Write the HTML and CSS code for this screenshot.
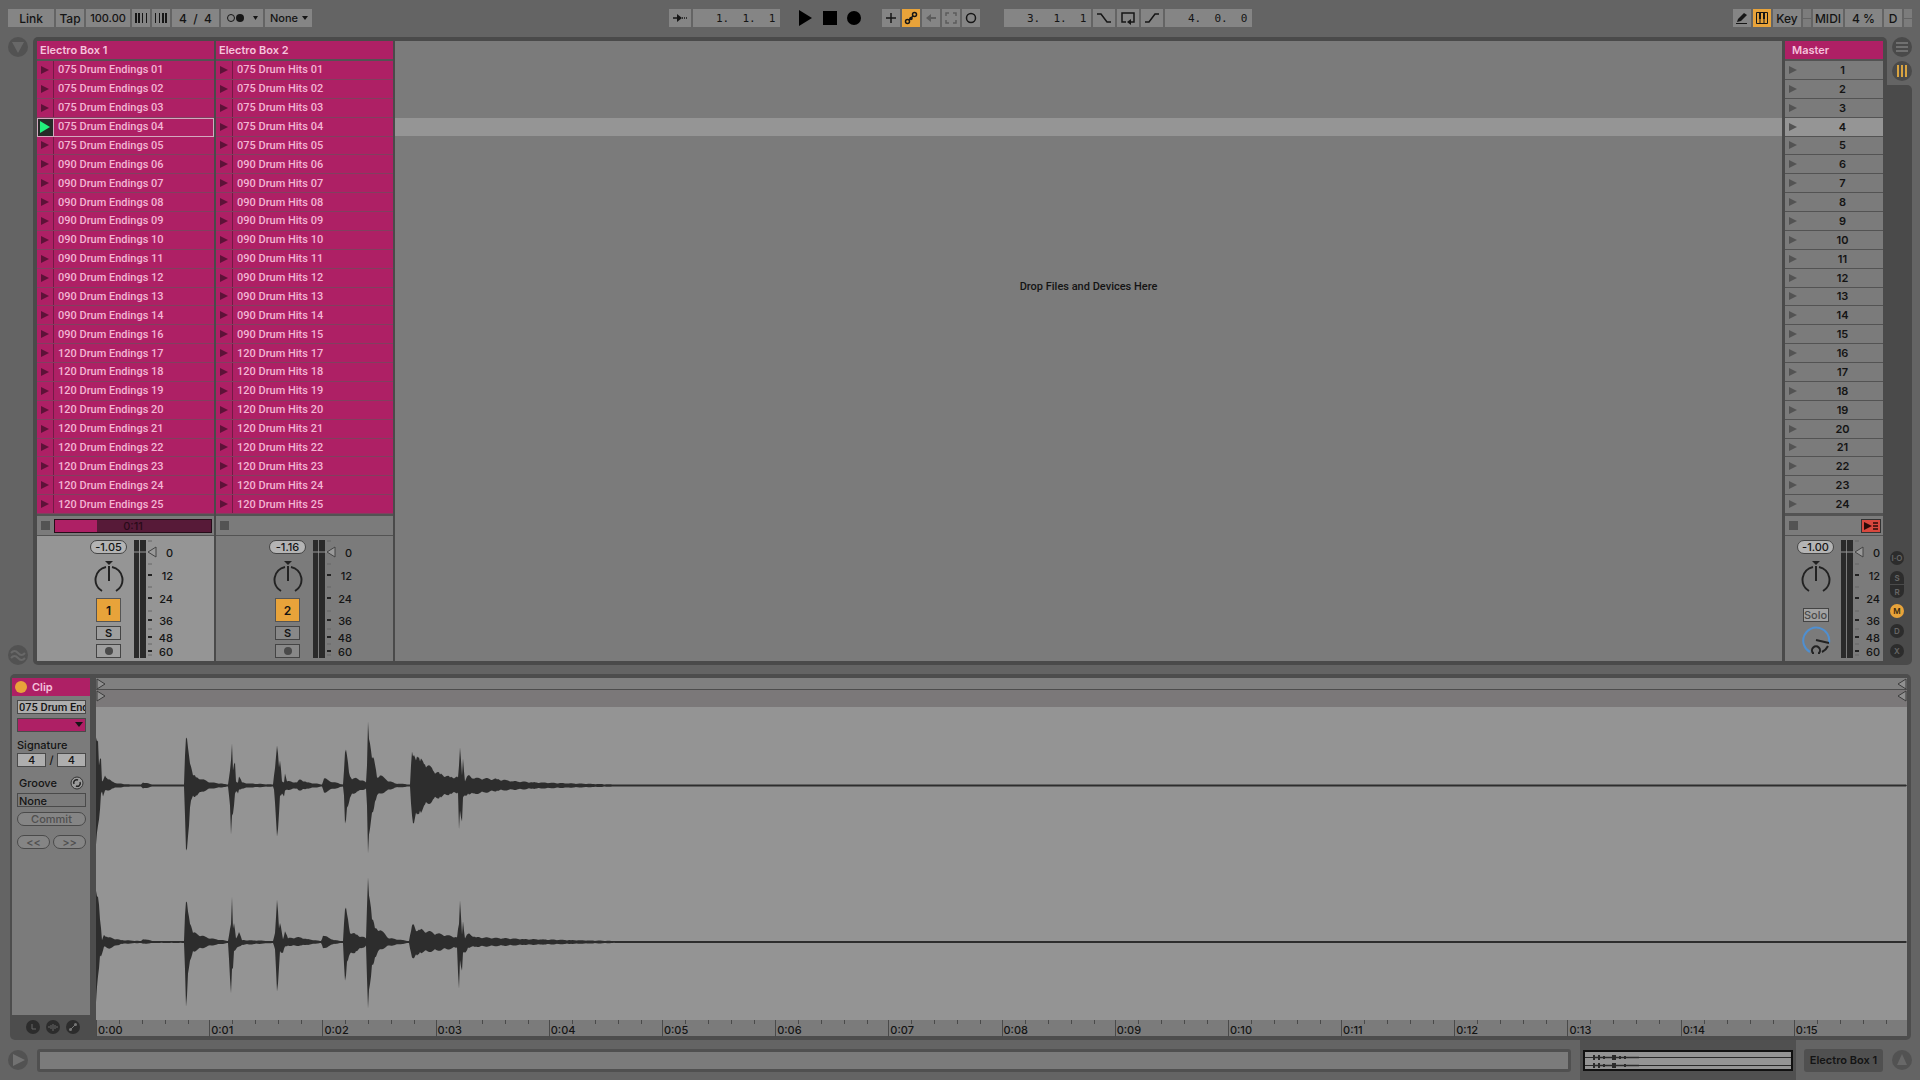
FILE: index.html
```html
<!DOCTYPE html>
<html lang="en">
<head>
  <meta charset="utf-8">
  <title>Drum Session</title>
  <link rel="stylesheet" href="styles.css">
</head>
<body>
  <header class="topbar">
    <div class="group">
      <button class="ctl w46">Link</button>
      <button class="ctl w28">Tap</button>
      <input class="ctl w44" type="text" value="100.00" aria-label="Tempo">
      <button class="ctl w18" aria-label="Nudge down"><svg width="14" height="12"><path d="M1 1h2v10H1zM4 1h2v10H4z" fill="#161616"/><path d="M8.500 1v10M12.500 1v10" stroke="#161616"/></svg></button>
      <button class="ctl w18" aria-label="Nudge up"><svg width="14" height="12"><path d="M1.500 1v10M5.500 1v10" stroke="#161616"/><path d="M8 1h2v10H8zM11 1h2v10h-2z" fill="#161616"/></svg></button>
      <button class="ctl w47 pre">4  /  4</button>
      <button class="ctl w42 metro" aria-label="Metronome"><svg width="32" height="10"><circle cx="5" cy="5" r="3.500" fill="none" stroke="#161616"/><circle cx="14" cy="5" r="4" fill="#161616"/><path d="M27 3h5l-2.500 4z" fill="#161616"/></svg></button>
      <div class="pick">
        <select class="ctl w47" aria-label="Quantization"><option>None</option></select>
      </div>
    </div>

    <div class="group center">
      <button class="ctl w23" aria-label="Follow"><svg width="16" height="10"><path d="M1 5h5M10 5h1M12 5h1M14 5h1" stroke="#161616" stroke-width="1.500"/><path d="M5 1l5 4-5 4z" fill="#161616"/></svg></button>
      <input class="ctl pos" type="text" value="1.  1.  1" aria-label="Position">
      <div class="transport">
        <button aria-label="Play"><svg width="14" height="16"><path d="M0 0l13 8-13 8z"/></svg></button>
        <button aria-label="Stop"><svg width="14" height="14"><path d="M0 0h14v14H0z"/></svg></button>
        <button aria-label="Record"><svg width="14" height="14"><circle cx="7" cy="7" r="7"/></svg></button>
      </div>
      <button class="ctl w18" aria-label="Overdub"><svg class="ico" width="14" height="14"><path d="M7 2v10M2 7h10"/></svg></button>
      <button class="ctl w18 on" aria-label="Automation arm"><svg class="ico" width="14" height="14"><circle cx="3.500" cy="10.500" r="2"/><circle cx="10.500" cy="3.500" r="2"/><circle cx="7" cy="7.500" r="1"/><path d="M5 9l4-4"/></svg></button>
      <button class="ctl w18 off" aria-label="Re-enable automation"><svg class="ico" width="14" height="14"><path d="M6 7h6" stroke-width="2"/><path d="M7 3v8L2 7z" fill="#5c5c5c" stroke="none"/></svg></button>
      <button class="ctl w18 off" aria-label="Capture"><svg class="ico" width="14" height="14"><path d="M2 5V2h3M9 2h3v3M12 9v3H9M5 12H2V9"/></svg></button>
      <button class="ctl w18" aria-label="Session record"><svg class="ico" width="14" height="14"><circle cx="7" cy="7" r="4.500"/></svg></button>
      <input class="ctl pos loopstart" type="text" value="3.  1.  1" aria-label="Loop start">
      <button class="ctl w23" aria-label="Punch in"><svg class="ico" width="16" height="12"><path d="M1 2h4l6 8h4"/></svg></button>
      <button class="ctl w23" aria-label="Loop"><svg class="ico" width="16" height="14"><path d="M6 11H2V2h12v9h-3"/><path d="M11 8v6l-4-3z" fill="#161616" stroke="none"/></svg></button>
      <button class="ctl w23" aria-label="Punch out"><svg class="ico" width="16" height="12"><path d="M1 10h4l6-8h4"/></svg></button>
      <input class="ctl pos" type="text" value="4.  0.  0" aria-label="Loop length">
    </div>

    <div class="group right">
      <button class="ctl w18" aria-label="Draw mode"><svg width="14" height="14"><path d="M3 8l6-6 3 2-6 6-4 1z" fill="#161616"/><path d="M1 12.500h11" stroke="#161616"/></svg></button>
      <button class="ctl w18 on" aria-label="Computer keyboard"><svg width="14" height="14"><path d="M1.500 1.500h11v11h-11zM5 7v5M9 7v5" fill="none" stroke="#161616"/><path d="M4 2h2v6H4zM8 2h2v6H8z" fill="#161616"/></svg></button>
      <button class="ctl w28">Key</button>
      <span class="leds"><i></i><i></i></span>
      <button class="ctl w30">MIDI</button>
      <span class="ctl w37">4 %</span>
      <span class="ctl w18">D</span>
      <span class="leds"><i></i><i></i></span>
    </div>
  </header>

  <main class="session">
    <aside class="gutter">
      <button class="round" aria-label="Browser"><svg width="20" height="20"><circle cx="10" cy="10" r="10" fill="#525252"/><path d="M4 5h12l-6 11z" fill="#686868"/></svg></button>
      <button class="round" aria-label="Groove pool"><svg width="20" height="20"><circle cx="10" cy="10" r="10" fill="#525252"/><path d="M3 8q3.500-4 7 0t7 0M3 13q3.500-4 7 0t7 0" fill="none" stroke="#686868" stroke-width="2"/></svg></button>
    </aside>

    <div class="tracks">
      <section class="track selected">
        <h2>Electro Box 1</h2>
        <div class="slots" data-name="Endings" data-skip="15" data-playing="3"></div>
        <div class="status"><button class="stop" aria-label="Stop clips"></button><div class="progress"><div class="fill"></div><span>0:11</span></div></div>
        <div class="mixer">
          <div class="strip">
            <input class="vol" type="text" value="-1.05" aria-label="Volume 1">
            <span class="knob"></span>
            <button class="activator">1</button>
            <button class="small">S</button>
            <button class="small" aria-label="Arm 1"><i class="dot"></i></button>
          </div>
          <div class="meter"></div>
        </div>
      </section>

      <section class="track">
        <h2>Electro Box 2</h2>
        <div class="slots" data-name="Hits" data-skip="16"></div>
        <div class="status"><button class="stop" aria-label="Stop clips"></button></div>
        <div class="mixer">
          <div class="strip">
            <input class="vol" type="text" value="-1.16" aria-label="Volume 2">
            <span class="knob"></span>
            <button class="activator">2</button>
            <button class="small">S</button>
            <button class="small" aria-label="Arm 2"><i class="dot"></i></button>
          </div>
          <div class="meter"></div>
        </div>
      </section>

      <section class="drop">
        <div class="droprows">
          <div class="highlight"></div>
          <p>Drop Files and Devices Here</p>
        </div>
      </section>

      <section class="track master">
        <h2>Master</h2>
        <div class="slots scenes"></div>
        <div class="status"><button class="stop" aria-label="Stop all clips"></button><button class="back" aria-label="Back to arrangement"><svg width="18" height="12"><path d="M2 2l8 4-8 4z" fill="#2b0b08"/><path d="M11 3h5M11 6h5M11 9h5" stroke="#2b0b08" stroke-width="1.500"/></svg></button></div>
        <div class="mixer">
          <div class="strip">
            <input class="vol" type="text" value="-1.00" aria-label="Master volume">
            <span class="knob"></span>
            <button class="solo">Solo</button>
            <svg class="cue" width="30" height="30"><path d="M9 26A13 13 0 1 1 28 17" fill="none" stroke="#4f8fd0" stroke-width="2"/><path d="M15 14l13 3M27 20q-2 4-6 6" fill="none" stroke="#222" stroke-width="2"/><path d="M12 28v-1a4 4 0 1 1 6 0v1" fill="none" stroke="#222" stroke-width="2"/></svg>
          </div>
          <div class="meter"></div>
        </div>
      </section>
    </div>

    <aside class="sidebar">
      <div class="views">
        <button class="round" aria-label="Arrangement"><svg width="20" height="20"><circle cx="10" cy="10" r="10" fill="#4a4a4a"/><path d="M4 6h12M4 10h12M4 14h12" stroke="#707070" stroke-width="2"/></svg></button>
        <button class="round" aria-label="Session"><svg width="20" height="20"><circle cx="10" cy="10" r="10" fill="#4a4a4a"/><path d="M6 4v12M10 4v12M14 4v12" stroke="#d9a441" stroke-width="2"/></svg></button>
      </div>
      <div class="toggles">
        <button class="tog">I·O</button>
        <div class="halves"><button class="tog top">S</button><button class="tog bottom">R</button></div>
        <button class="tog lit">M</button>
        <button class="tog">D</button>
        <button class="tog">X</button>
      </div>
    </aside>
  </main>

  <section class="clipview">
    <div class="clipside">
      <div class="clipbox">
        <h2><i></i>Clip</h2>
        <form>
          <input class="name" type="text" value="075 Drum Endings 04" aria-label="Clip name">
          <button type="button" class="color" aria-label="Clip color"></button>
          <label class="sig" for="num">Signature</label>
          <div class="row"><input id="num" type="text" value="4"><span>/</span><input type="text" value="4" aria-label="Denominator"></div>
          <div class="row groove"><label for="groove">Groove</label><svg width="14" height="14"><circle cx="7" cy="7" r="6" fill="#9a9a9a" stroke="#333"/><path d="M4 8a3 3 0 0 1 4-4M10 6a3 3 0 0 1-4 4" fill="none" stroke="#222" stroke-width="1.500"/></svg></div>
          <select id="groove"><option>None</option></select>
          <button type="button" class="pill">Commit</button>
          <div class="row nudge"><button type="button" class="pill">&lt;&lt;</button><button type="button" class="pill">&gt;&gt;</button></div>
        </form>
      </div>
      <div class="cliptabs">
        <svg width="14" height="14"><circle cx="7" cy="7" r="7" fill="#2c2c2c"/><path d="M6 4v5h4" fill="none" stroke="#666"/></svg>
        <svg width="14" height="14"><circle cx="7" cy="7" r="7" fill="#2c2c2c"/><path d="M3 6v2M5 5v4M7 4v7M9 5v4M11 6v2" stroke="#666"/></svg>
        <svg width="14" height="14"><circle cx="7" cy="7" r="7" fill="#2c2c2c"/><path d="M5 9l4-4" stroke="#777"/><circle cx="4.500" cy="9.500" r="1.500" fill="#777"/><circle cx="9.500" cy="4.500" r="1.500" fill="#777"/></svg>
      </div>
    </div>
    <div class="sample">
      <div class="marks loop">
        <svg width="10" height="12"><path d="M1 1v10l8-5z"/></svg>
        <svg width="10" height="12"><path d="M9 1v10L1 6z"/></svg>
      </div>
      <div class="marks">
        <svg width="10" height="12"><path d="M1 1v10l8-5z"/></svg>
        <svg width="10" height="12"><path d="M9 1v10L1 6z"/></svg>
      </div>
      <svg class="wave" viewBox="0 0 1811 313" preserveAspectRatio="none"></svg>
      <div class="ruler"></div>
    </div>
  </section>

  <footer class="bottombar">
    <button class="round" aria-label="Info"><svg width="20" height="20"><circle cx="10" cy="10" r="10" fill="#525252"/><path d="M5 4l12 6-12 6z" fill="#727272"/></svg></button>
    <div class="info"></div>
    <div class="overview"><svg viewBox="0 0 206 17" preserveAspectRatio="none"><path d="M0 5.500h206M0 13.500h206" stroke="#2a2a2a"/><path d="M8 5.500h46M8 13.500h46" stroke="#2a2a2a" stroke-width="1.500"/><path d="M9 3v5M14 3v5M19 4v3M35 4v3M40 4v3M9 11v5M14 11v5M19 12v3M40 12v3" stroke="#2a2a2a" stroke-width="2"/><path d="M29 3v5M29 11v5" stroke="#2a2a2a" stroke-width="4"/></svg></div>
    <button class="device">Electro Box 1</button>
    <button class="round" aria-label="Detail view"><svg width="20" height="20"><circle cx="10" cy="10" r="10" fill="#525252"/><path d="M10 4l5 11H5z" fill="#686868"/></svg></button>
  </footer>

  <script src="script.js"></script>
</body>
</html>
```
FILE: styles.css
```css
* {
  box-sizing: border-box;
}
body {
  margin: 0;
  min-height: 100vh;
  display: flex;
  flex-direction: column;
  background-color: #646464;
  color: #141414;
  font-family: Inter, "Liberation Sans", sans-serif;
  font-size: 11px;
  font-weight: 500;
}
button, input, select {
  font: inherit;
  color: inherit;
  border: none;
  border-radius: 0;
  padding: 0;
  margin: 0;
  background: none;
  appearance: none;
  min-width: 0;
}
h2, p {
  margin: 0;
  font-size: 11px;
}
svg {
  display: block;
}

/* top bar */
.topbar {
  display: grid;
  grid-template-columns: 1fr auto 1fr;
  padding: 9px 8px 10px;
}
.group {
  display: flex;
  gap: 2px;
}
.right {
  justify-content: flex-end;
}
.ctl {
  height: 18px;
  background-color: #858585;
  display: flex;
  align-items: center;
  justify-content: center;
  text-align: center;
  font-size: 12px;
}
.pre {
  white-space: pre;
}
.w18 { width: 18px; }
.w23 { width: 22px; }
.w28 { width: 28px; }
.w30 { width: 30px; }
.w37 { width: 37px; }
.w42 { width: 42px; }
.w44 { width: 44px; }
.w46 { width: 46px; }
.w47 { width: 47px; }
.pos {
  width: 87px;
  text-align: right;
  padding-right: 4px;
  font-family: "DejaVu Sans Mono", monospace;
  font-size: 11px;
}
.loopstart {
  margin-left: 22px;
}
.on {
  background-color: #e8a33a;
}
.ico {
  fill: none;
  stroke: #161616;
  stroke-width: 1.500;
}
.off .ico {
  stroke: #5c5c5c;
}
.pick {
  position: relative;
}
.pick select {
  text-align: left;
  padding-left: 5px;
}
.pick::after, .color::after {
  content: "";
  position: absolute;
  right: 4px;
  top: 7px;
  border: 3px solid transparent;
  border-top: 4px solid #161616;
  border-bottom: none;
}
.pick select, .w44 {
  font-size: 11px;
}
.transport {
  display: flex;
  align-items: center;
  gap: 10px;
  padding: 0 19px 0 17px;
}
.leds {
  display: flex;
  flex-direction: column;
  gap: 1px;
  width: 8px;
}
.leds i {
  flex: 1;
  background-color: #7c7c7c;
}

/* session view */
.session {
  flex: 1;
  display: flex;
}
.gutter {
  width: 33px;
  padding: 0 5px 0 8px;
  display: flex;
  flex-direction: column;
  justify-content: space-between;
}
.round {
  width: 20px;
  height: 20px;
  flex: none;
}
.tracks {
  flex: 1;
  display: flex;
  gap: 2px;
  padding: 4px;
  background-color: #4a4a4a;
  border-radius: 5px 5px 0 5px;
}
.track {
  width: 177px;
  display: flex;
  flex-direction: column;
  background-color: #535353;
}
.track h2 {
  height: 18px;
  line-height: 18px;
  padding-left: 3px;
  background-color: #ae2065;
  color: #f5c3dc;
  font-weight: 600;
}
.slots, .droprows {
  flex: 1;
  display: grid;
  grid-template-rows: repeat(24, 1fr);
  margin: 2px 0;
}
.slots {
  background-color: #ae2065;
}
.slot {
  display: flex;
  align-items: center;
  gap: 4px;
  text-align: left;
  color: #f3b5d3;
  border-bottom: 1px solid #80405f;
}
.slot, .drop p, .name {
  font-family: Roboto, "Liberation Sans", sans-serif;
}
.launch {
  width: 17px;
  align-self: stretch;
  display: flex;
  align-items: center;
  padding-left: 4px;
  border-right: 1px solid #741a46;
}
.launch::before {
  content: "";
  border: 4px solid transparent;
  border-left: 8px solid #5d1238;
  border-right: none;
}
.slot.playing {
  outline: 1px solid #d3a9bf;
  outline-offset: -1px;
}
.playing .launch {
  padding-left: 3px;
  background-color: #262b28;
  border-color: #d3a9bf;
}
.playing .launch::before {
  border-width: 6px 0 6px 10px;
  border-left-color: #22f07c;
}
.scenes {
  background-color: #7b7b7b;
}
.scene {
  display: grid;
  grid-template-columns: 17px 1fr;
  align-items: center;
  color: #141414;
  font-weight: 600;
  border-bottom: 1px solid #535353;
}
.scene .launch {
  border: none;
}
.scene .launch::before {
  border-left-color: #535353;
}
.scene.current {
  background-color: #959595;
}
.status {
  height: 19px;
  display: flex;
  align-items: center;
  background-color: #7b7b7b;
  padding: 0 2px 0 4px;
  margin-bottom: 1px;
}
.stop {
  width: 9px;
  height: 9px;
  background-color: #535353;
}
.progress {
  flex: 1;
  height: 14px;
  margin-left: 4px;
  display: grid;
  grid-template-columns: 27% 1fr 27%;
  text-align: center;
  line-height: 12px;
  border: 1px solid #260d19;
  background-color: #571a38;
  color: #290a19;
}
.fill {
  background-color: #ae2065;
}
.back {
  margin-left: auto;
  border: 1px solid #333;
  background-color: #d8483e;
}
.mixer {
  height: 125px;
  display: flex;
  gap: 7px;
  padding: 4px 0 3px 53px;
  background-color: #7b7b7b;
}
.selected .mixer {
  background-color: #959595;
}
.strip {
  width: 37px;
  display: flex;
  flex-direction: column;
  align-items: center;
}
.vol {
  width: 37px;
  height: 14px;
  border: 1px solid #444;
  border-radius: 7px;
  background-color: #b4b4b4;
  text-align: center;
}
.knob {
  height: 34px;
  margin: 6px 0 4px;
}
.activator {
  width: 25px;
  height: 25px;
  border: 1px solid #555;
  background-color: #e8a33a;
  font-size: 12px;
  font-weight: 600;
}
.small {
  width: 25px;
  height: 14px;
  margin-top: 4px;
  display: flex;
  align-items: center;
  justify-content: center;
  border: 1px solid #444;
  background-color: rgba(255, 255, 255, 0.1);
  font-weight: 600;
}
.dot {
  width: 8px;
  height: 8px;
  border-radius: 50%;
  background-color: #4a4a4a;
}
.meter text {
  font-size: 11px;
  text-anchor: end;
  fill: #141414;
}
.drop {
  flex: 1;
  display: flex;
  padding: 18px 0 146px;
  background-color: #7b7b7b;
}
.droprows {
  grid-template-columns: 1fr;
}
.highlight {
  grid-area: 4 / 1;
  background-color: #959595;
}
.drop p {
  grid-area: 1 / 1 / -1 / 1;
  align-self: center;
  padding-bottom: 2px;
  text-align: center;
}
.master {
  width: 98px;
  margin-left: 1px;
}
.master h2 {
  padding-left: 7px;
}
.master .mixer {
  padding-left: 12px;
}
.solo {
  width: 26px;
  height: 14px;
  margin: 10px 0 4px;
  border: 1px solid #444;
  background-color: #a2a2a2;
  color: #4a4a4a;
  line-height: 12px;
}

/* view switches on the right */
.sidebar {
  width: 33px;
  padding-right: 8px;
  display: flex;
  flex-direction: column;
}
.views {
  height: 48px;
  padding-left: 5px;
  display: flex;
  flex-direction: column;
  gap: 4px;
}
.toggles {
  flex: 1;
  display: flex;
  flex-direction: column;
  align-items: center;
  justify-content: flex-end;
  gap: 6px;
  padding: 0 5px 7px 0;
  background-color: #4a4a4a;
  border-radius: 0 5px 5px 0;
}
.tog {
  width: 14px;
  height: 14px;
  border-radius: 7px;
  background-color: #2c2c2c;
  color: #666;
  font-size: 8px;
  font-weight: 600;
  line-height: 14px;
}
.halves {
  display: grid;
  gap: 1px;
}
.top {
  height: 13px;
  border-radius: 7px 7px 0 0;
}
.bottom {
  height: 13px;
  border-radius: 0 0 7px 7px;
}
.lit {
  background-color: #e8a33a;
  color: #3a2a10;
}

/* clip view */
.clipview {
  height: 366px;
  margin: 9px 9px 0 10px;
  padding: 4px 4px 4px 2px;
  display: flex;
  gap: 6px;
  background-color: #4d4d4d;
  border-radius: 5px;
}
.clipside {
  width: 78px;
  display: flex;
  flex-direction: column;
}
.clipbox {
  flex: 1;
  background-color: #7b7b7b;
}
.clipbox h2 {
  height: 18px;
  display: flex;
  align-items: center;
  gap: 5px;
  padding-left: 3px;
  background-color: #ae2065;
  color: #f5c3dc;
  font-weight: 600;
}
.clipbox h2 i {
  width: 12px;
  height: 12px;
  border-radius: 50%;
  background-color: #e8a33a;
}
.clipbox form {
  display: flex;
  flex-direction: column;
  padding: 4px 4px 0 5px;
}
.clipbox input, .clipbox select, .color, .pill {
  width: 100%;
  height: 14px;
  border: 1px solid #4a4a4a;
}
.clipbox input {
  background-color: #aeaeae;
  text-align: center;
}
.clipbox .name {
  text-align: left;
  padding-left: 1px;
}
.color {
  position: relative;
  margin: 4px 0 6px;
  background-color: #ae2065;
}
.color::after {
  right: 2px;
  top: 3px;
  border-width: 5px 4px 0;
}
.sig {
  line-height: 15px;
}
.row {
  display: flex;
  align-items: center;
  gap: 3px;
}
.groove {
  justify-content: space-between;
  height: 26px;
  padding: 5px 2px 0;
}
.clipbox select {
  padding-left: 1px;
}
.pill {
  margin-top: 5px;
  border-radius: 7px;
  background-color: #858585;
  color: #4f4f4f;
  line-height: 12px;
}
.nudge {
  margin-top: 4px;
}
.cliptabs {
  height: 21px;
  display: flex;
  align-items: flex-end;
  justify-content: center;
  gap: 6px;
  padding: 0 0 2px 3px;
}
.sample {
  flex: 1;
  display: flex;
  flex-direction: column;
  background-color: #949494;
}
.marks {
  height: 17px;
  display: flex;
  justify-content: space-between;
  align-items: flex-start;
  background-color: #7b7879;
}
.loop {
  height: 12px;
  background-color: #808080;
  border-bottom: 1px solid #4d4d4d;
}
.marks path {
  fill: #909090;
  stroke: #3c3c3c;
}
.wave {
  flex: 1;
  width: 100%;
  min-height: 0;
}
.wave path {
  fill: #2d2d2d;
}
.ruler {
  height: 16px;
  display: grid;
  grid-template-columns: repeat(16, 1fr);
  background-color: #7b7b7b;
}
.ruler span {
  padding: 3px 0 0 1px;
  line-height: 14px;
  border-left: 1px solid #4a4a4a;
  background-image: repeating-linear-gradient(90deg, transparent 0 22px, #4a4a4a 22px 23px);
  background-size: 100% 4px;
  background-repeat: no-repeat;
}

/* bottom bar */
.bottombar {
  display: flex;
  align-items: center;
  padding: 0 8px;
  height: 40px;
}
.info {
  flex: 1;
  height: 23px;
  margin: 0 9px;
  border: 3px solid #505050;
  border-radius: 3px;
  background-color: #7b7b7b;
}
.overview {
  width: 216px;
  align-self: stretch;
  display: flex;
  align-items: center;
  padding: 0 3px;
  background-color: #505050;
}
.overview svg {
  width: 100%;
  height: 21px;
  border: 2px solid #111;
  background-color: #949494;
}
.device {
  width: 79px;
  height: 23px;
  margin: 0 9px 0 8px;
  border-radius: 3px;
  background-color: #505050;
  font-weight: 600;
}
```
FILE: script.js
```js
// clip slots
document.querySelectorAll(".slots[data-name]").forEach(function (list) {
  let html = "";
  let row = 0;
  for (let n = 1; n <= 25; n++) {
    if (n === Number(list.dataset.skip)) continue;
    const bpm = n <= 5 ? "075" : n <= 16 ? "090" : "120";
    const playing = String(row) === list.dataset.playing ? " playing" : "";
    html += `<button class="slot${playing}"><span class="launch"></span>${bpm} Drum ${list.dataset.name} ${String(n).padStart(2, "0")}</button>`;
    row++;
  }
  list.innerHTML = html;
});

// scenes
let scenes = "";
for (let n = 1; n <= 24; n++) {
  scenes += `<button class="scene${n === 4 ? " current" : ""}"><span class="launch"></span>${n}</button>`;
}
document.querySelector(".scenes").innerHTML = scenes;

// pan knobs
document.querySelectorAll(".knob").forEach(function (knob) {
  knob.innerHTML = `<svg width="30" height="34">
    <path d="M11 1h8l-4 4z" fill="#222"/>
    <path d="M15 6v15M12 7A13 13 0 0 0 8 31M18 7A13 13 0 0 1 22 31" fill="none" stroke="#222" stroke-width="2"/>
  </svg>`;
});

// level meters, label and its y
const scale = [[0, 12], [12, 35], [24, 58], [36, 80], [48, 97], [60, 111]];
document.querySelectorAll(".meter").forEach(function (meter) {
  let svg = '<svg width="42" height="118"><path d="M0 0h5v118H0zM6 0h6v118H6z" fill="#2a2a2a"/><path d="M0 12h14" stroke="#999"/>';
  svg += '<path d="M22 7v10l-8-5z" fill="#999" stroke="#444"/>';
  svg += '<path d="M14 1h4M14 24h4M14 47h4M14 71h4M14 89h4M14 104h4M14 115h4" stroke="#666"/>';
  scale.forEach(function ([db, y]) {
    if (db) svg += `<path d="M14 ${y}h4" stroke="#222" stroke-width="2"/>`;
    svg += `<text x="39" y="${y + 5}">${db}</text>`;
  });
  meter.innerHTML = svg + "</svg>";
});

// waveform envelopes: x, up, down
const left = [
  [0, 48, 59], [2, 45, 40], [3, 20, 34], [5, 27, 8], [6, 4, 6], [7, 5, 11], [9, 10, 5], [12, 6, 5], [16, 4, 3], [21, 2, 2], [34, 1, 1],
  [45, 1, 1], [47, 3, 3], [56, 1, 1], [88, 1, 1], [89, 30, 30], [90, 48, 65], [93, 30, 40], [94, 22, 22], [95, 19, 15],
  [97, 10, 10], [100, 8, 10], [106, 6, 6], [114, 3, 3], [132, 1, 1], [134, 15, 20], [135, 25, 49], [136, 42, 30],
  [137, 15, 28], [139, 23, 8], [140, 4, 6], [142, 3, 8], [143, 9, 4], [146, 3, 3], [151, 2, 2], [177, 1, 1],
  [178, 10, 4], [181, 40, 51], [183, 18, 28], [184, 25, 10], [186, 4, 8], [188, 3, 11], [189, 12, 5], [191, 4, 4],
  [201, 3, 3], [204, 6, 5], [211, 3, 3], [226, 1, 1], [228, 7, 7], [234, 4, 4], [247, 1, 1], [248, 15, 10], [249, 33, 38],
  [251, 30, 22], [253, 13, 17], [256, 6, 8], [261, 7, 6], [270, 3, 3], [271, 20, 20], [272, 64, 68], [275, 35, 35],
  [276, 27, 27], [279, 21, 16], [281, 8, 10], [284, 10, 8], [291, 5, 5], [299, 2, 2], [314, 1, 1], [316, 34, 30],
  [317, 29, 38], [321, 29, 29], [324, 24, 25], [329, 21, 19], [337, 15, 14], [344, 11, 11], [354, 8, 8], [362, 8, 7],
  [363, 20, 44], [364, 38, 25], [366, 10, 36], [367, 27, 12], [369, 4, 10], [372, 10, 8], [377, 7, 8], [401, 6, 5],
  [417, 4, 4], [437, 3, 3], [471, 2, 2], [520, 1, 1], [1811, 1, 1]
];
const right = [
  [0, 57, 67], [2, 50, 38], [4, 25, 15], [6, 2, 13], [8, 8, 5], [12, 5, 7], [25, 2, 2], [45, 1, 1], [47, 3, 2], [58, 1, 1], [88, 1, 1],
  [89, 30, 30], [90, 45, 72], [92, 34, 35], [95, 18, 18], [97, 10, 10], [102, 8, 8], [113, 4, 4], [132, 1, 1],
  [135, 20, 57], [136, 50, 30], [137, 15, 29], [138, 21, 10], [140, 4, 8], [143, 11, 5], [146, 2, 3], [177, 1, 1],
  [179, 10, 8], [181, 47, 55], [183, 15, 28], [184, 21, 10], [187, 3, 12], [189, 12, 5], [192, 4, 4], [204, 5, 4],
  [211, 3, 3], [225, 1, 1], [227, 7, 7], [238, 2, 2], [247, 1, 1], [249, 36, 43], [251, 31, 22], [254, 10, 13],
  [260, 8, 10], [270, 4, 4], [272, 72, 74], [276, 25, 25], [279, 15, 17], [284, 13, 8], [293, 4, 4], [313, 1, 1],
  [315, 12, 12], [317, 20, 18], [321, 12, 15], [324, 13, 11], [340, 9, 9], [361, 5, 6], [363, 20, 52], [364, 46, 20],
  [366, 8, 32], [367, 23, 12], [369, 4, 12], [372, 9, 6], [380, 5, 5], [428, 3, 3], [475, 2, 2], [520, 1, 1], [1811, 1, 1]
];

function envelope(points, mid, gain) {
  const up = [];
  const down = [];
  for (let i = 0; i < points.length - 1; i++) {
    const [x0, u0, d0] = points[i];
    const [x1, u1, d1] = points[i + 1];
    for (let x = x0; x < x1; x++) {
      const t = (x - x0) / (x1 - x0);
      // a little roughness between the points
      const r = x === x0 || x > 520 ? 1 : 0.85 + 0.3 * Math.abs(Math.sin(x * 12.9));
      const u = Math.max(1, (u0 + (u1 - u0) * t) * r * gain);
      const d = Math.max(0.5, (d0 + (d1 - d0) * t) * r * gain);
      up.push(`${x} ${(mid - u).toFixed(1)}`);
      down.unshift(`${x} ${(mid + d).toFixed(1)}`);
    }
  }
  return `<path d="M${up.join("L")}L1811 ${mid}L${down.join("L")}z"/>`;
}
document.querySelector(".wave").innerHTML = envelope(left, 78.5, 1) + envelope(right, 235, 0.9);

// time ruler
let ruler = "";
for (let s = 0; s < 16; s++) {
  ruler += `<span>0:${String(s).padStart(2, "0")}</span>`;
}
document.querySelector(".ruler").innerHTML = ruler;
```
